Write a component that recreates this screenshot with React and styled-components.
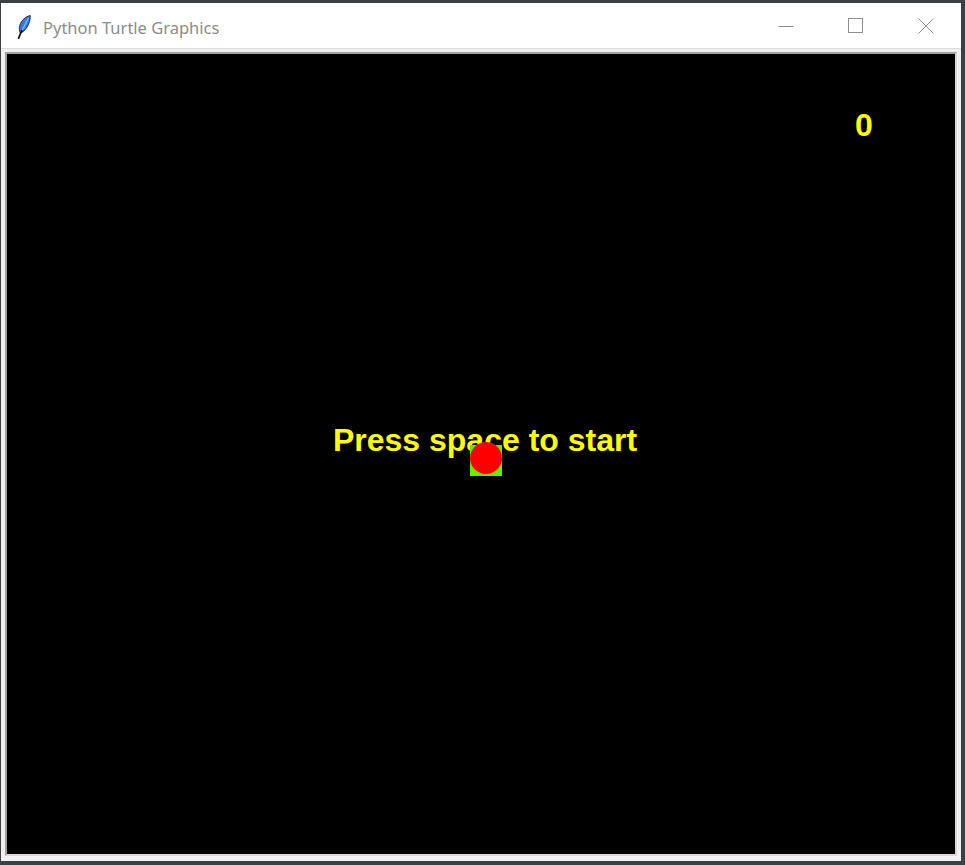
import React from "react";
import styled, { createGlobalStyle } from "styled-components";

const Global = createGlobalStyle`
  html, body { margin: 0; padding: 0; background: #3c3f43; }
  body { padding: 3px 0 0 1px; font-family: "Noto Sans", "Liberation Sans", sans-serif; }
`;

const Window = styled.div`
  width: 960px;
  height: 858px;
  background: #f0f0f0;
  display: flex;
  flex-direction: column;
  box-sizing: border-box;
`;

const TitleBar = styled.div`
  height: 45px;
  flex: 0 0 45px;
  background: #ffffff;
  border-bottom: 1px solid #dcdcdc;
  display: flex;
  align-items: center;
`;

const AppIcon = styled.svg`
  width: 14px;
  height: 24px;
  margin-left: 16px;
  margin-top: 2px;
  flex: 0 0 auto;
`;

const Title = styled.span`
  margin-left: 12px;
  font-family: "Noto Sans", sans-serif;
  font-size: 16.5px;
  color: #8c8c8c;
  flex: 1 1 auto;
  padding-top: 3px;
`;

const Caption = styled.div`
  width: 70px;
  height: 45px;
  display: flex;
  align-items: center;
  justify-content: center;
`;

const Client = styled.div`
  flex: 1 1 auto;
  padding: 3px 4px 5px 4px;
  display: flex;
`;

const Canvas = styled.div`
  position: relative;
  flex: 1 1 auto;
  background: #000000;
  border: 2px solid;
  border-color: #a0a0a0 #d8d8d8 #d8d8d8 #a0a0a0;
  overflow: hidden;
`;

const GameText = styled.div`
  position: absolute;
  font-family: "Liberation Sans", Arial, sans-serif;
  font-weight: bold;
  font-size: 32px;
  line-height: 32px;
  color: #ffff00;
  white-space: nowrap;
  left: ${(p) => p.$x}px;
  top: ${(p) => p.$y}px;
  transform: ${(p) => (p.$center ? "translateX(-50%)" : "none")};
`;

const Paddle = styled.div`
  position: absolute;
  left: ${(p) => p.$x}px;
  top: ${(p) => p.$y}px;
  width: 32px;
  height: 31px;
  background: #5cf000;
`;

const Ball = styled.div`
  position: absolute;
  left: ${(p) => p.$x}px;
  top: ${(p) => p.$y}px;
  width: 32px;
  height: 32px;
  border-radius: 50%;
  background: #ff0000;
`;

const Feather = () => (
  <AppIcon viewBox="0 0 14 24">
    <path
      d="M13.2 0.6 C8.6 1.4 4.4 5.4 2.8 10.4 C2 13 2.2 15.8 3.4 18.2 C7.2 16.6 10 13 11.6 9 C12.8 6 13.4 3.2 13.2 0.6 Z"
      fill="#3a78e0"
      stroke="#1a2a4a"
      strokeWidth="1"
    />
    <path d="M11.6 3 L4.4 16.4" stroke="#a8ccff" strokeWidth="0.9" />
    <path d="M8 6.5 L11 5.6 M6.6 9.5 L10 8.8 M5.4 12.6 L8.4 12.2" stroke="#6aa4ff" strokeWidth="0.6" />
    <path d="M4.8 15.6 L1.6 23.2" stroke="#111" strokeWidth="1.7" strokeLinecap="round" />
  </AppIcon>
);

const Minimize = () => (
  <svg width="16" height="16" viewBox="0 0 16 16">
    <line x1="0.5" y1="8.5" x2="15.5" y2="8.5" stroke="#8f8f8f" strokeWidth="1" />
  </svg>
);

const Maximize = () => (
  <svg width="16" height="16" viewBox="0 0 16 16">
    <rect x="0.5" y="0.5" width="14" height="14" fill="none" stroke="#8f8f8f" strokeWidth="1" />
  </svg>
);

const Close = () => (
  <svg width="16" height="16" viewBox="0 0 16 16">
    <path d="M0.5 0.5 L15.5 15.5 M15.5 0.5 L0.5 15.5" stroke="#8f8f8f" strokeWidth="1" />
  </svg>
);

export default function App() {
  return (
    <>
      <Global />
      <Window>
        <TitleBar>
          <Feather />
          <Title>Python Turtle Graphics</Title>
          <Caption><Minimize /></Caption>
          <Caption><Maximize /></Caption>
          <Caption><Close /></Caption>
        </TitleBar>
        <Client>
          <Canvas>
            <GameText $x={848} $y={55}>0</GameText>
            <GameText $x={478} $y={370} $center>Press space to start</GameText>
            <Paddle $x={463} $y={391} />
            <Ball $x={463} $y={388} />
          </Canvas>
        </Client>
      </Window>
    </>
  );
}
